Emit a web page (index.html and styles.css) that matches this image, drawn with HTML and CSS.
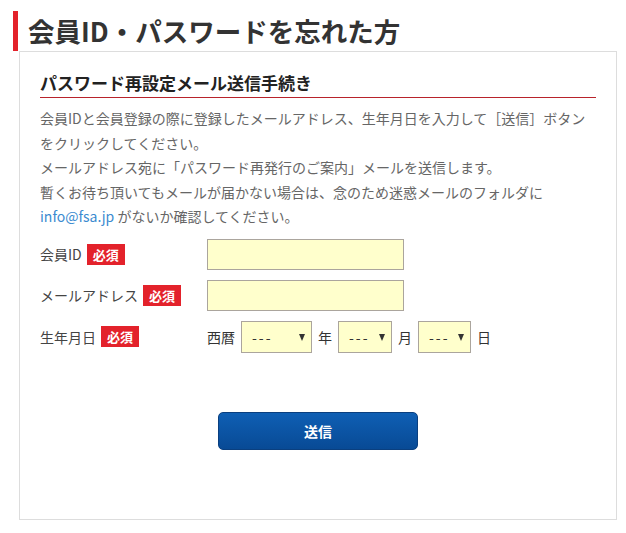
FILE: index.html
```html
<!DOCTYPE html>
<html lang="ja">

<head>
    <meta charset="UTF-8">
    <meta name="viewport" content="width=device-width, initial-scale=1.0">
    <title>会員ID・パスワードを忘れた方</title>
    <link rel="stylesheet" href="styles.css">
</head>

<body>
    <div class="page">
        <h1 class="page-title">会員ID・パスワードを忘れた方</h1>

        <div class="panel">
            <h2 class="panel-title">パスワード再設定メール送信手続き</h2>
            <p class="lead">
                会員IDと会員登録の際に登録したメールアドレス、生年月日を入力して［送信］ボタンをクリックしてください。<br>
                メールアドレス宛に「パスワード再発行のご案内」メールを送信します。<br>
                暫くお待ち頂いてもメールが届かない場合は、念のため迷惑メールのフォルダに<br>
                <a href="#" class="mail-link">info@fsa.jp</a> がないか確認してください。
            </p>

            <form class="form">
                <div class="form-row">
                    <label class="form-label" for="memberId">会員ID<span class="required">必須</span></label>
                    <input type="text" id="memberId" class="text-input">
                </div>
                <div class="form-row">
                    <label class="form-label" for="mail">メールアドレス<span class="required">必須</span></label>
                    <input type="text" id="mail" class="text-input">
                </div>
                <div class="form-row">
                    <span class="form-label">生年月日<span class="required">必須</span></span>
                    <div class="birth">
                        <span>西暦</span>
                        <span class="select-wrap year">
                            <select>
                                <option>---</option>
                            </select>
                        </span>
                        <span>年</span>
                        <span class="select-wrap month">
                            <select>
                                <option>---</option>
                            </select>
                        </span>
                        <span>月</span>
                        <span class="select-wrap day">
                            <select>
                                <option>---</option>
                            </select>
                        </span>
                        <span>日</span>
                    </div>
                </div>

                <div class="actions">
                    <button type="button" class="submit-button">送信</button>
                </div>
            </form>
        </div>
    </div>
</body>

</html>
```

FILE: styles.css
```css
body {
    margin: 0;
    font-family: "Noto Sans CJK JP", "Noto Sans", sans-serif;
    background-color: #fff;
    color: #444;
}

.page {
    padding: 11px 0 0 13px;
}

.page-title {
    margin: 0;
    padding-left: 10px;
    border-left: 5px solid #e3222b;
    font-size: 26.5px;
    line-height: 40px;
    font-weight: bold;
    color: #333;
}

.panel {
    margin-left: 6px;
    width: 598px;
    box-sizing: border-box;
    border: 1px solid #ddd;
    padding: 18px 20px 69px 20px;
}

.panel-title {
    margin: 0;
    padding-bottom: 1px;
    border-bottom: 1px solid #b8232b;
    font-size: 17px;
    line-height: 26px;
    font-weight: bold;
    color: #222;
}

.lead {
    margin: 8px 0 0;
    font-size: 14px;
    line-height: 24.6px;
    color: #666;
}

.mail-link {
    color: #3b8bd0;
    text-decoration: none;
}

.form {
    margin-top: 10px;
    display: flex;
    flex-direction: column;
    gap: 10px;
}

.form-row {
    display: grid;
    grid-template-columns: 167px 1fr;
    align-items: center;
}

.form-label {
    display: flex;
    align-items: center;
    font-size: 14px;
    color: #444;
}

.required {
    margin-left: 5px;
    padding: 0 6px;
    height: 21px;
    line-height: 21px;
    background-color: #e3222b;
    color: #fff;
    font-size: 13px;
    font-weight: bold;
}

.text-input {
    width: 197px;
    height: 31px;
    box-sizing: border-box;
    border: 1px solid #aba59d;
    background-color: #ffffcc;
    margin: 0;
    padding: 0 8px;
    font-family: inherit;
    font-size: 14px;
}

.birth {
    display: flex;
    align-items: center;
    gap: 6px;
    font-size: 14px;
    color: #333;
}

.select-wrap {
    position: relative;
    display: block;
    height: 32px;
}

.select-wrap select {
    appearance: none;
    -webkit-appearance: none;
    width: 100%;
    height: 32px;
    box-sizing: border-box;
    border: 1px solid #aba59d;
    border-radius: 0;
    background-color: #ffffcc;
    margin: 0;
    padding: 0 0 0 10px;
    font-family: inherit;
    font-size: 14px;
    letter-spacing: 2px;
    color: #333;
}

.select-wrap::after {
    content: "";
    position: absolute;
    right: 7px;
    top: 13px;
    border-left: 3.5px solid transparent;
    border-right: 3.5px solid transparent;
    border-top: 7px solid #333;
    pointer-events: none;
}

.year {
    width: 71px;
}

.month {
    width: 54px;
}

.day {
    width: 53px;
}

.actions {
    margin-top: 49px;
    display: flex;
    justify-content: center;
}

.submit-button {
    width: 200px;
    height: 38px;
    border: 1px solid #0a3f7f;
    border-radius: 5px;
    background: linear-gradient(to bottom, #0f5fb4, #084a95);
    color: #fff;
    font-family: inherit;
    font-size: 14px;
    font-weight: bold;
    cursor: pointer;
}

.submit-button:hover {
    background: linear-gradient(to bottom, #1a6ac0, #0a52a3);
}
```
